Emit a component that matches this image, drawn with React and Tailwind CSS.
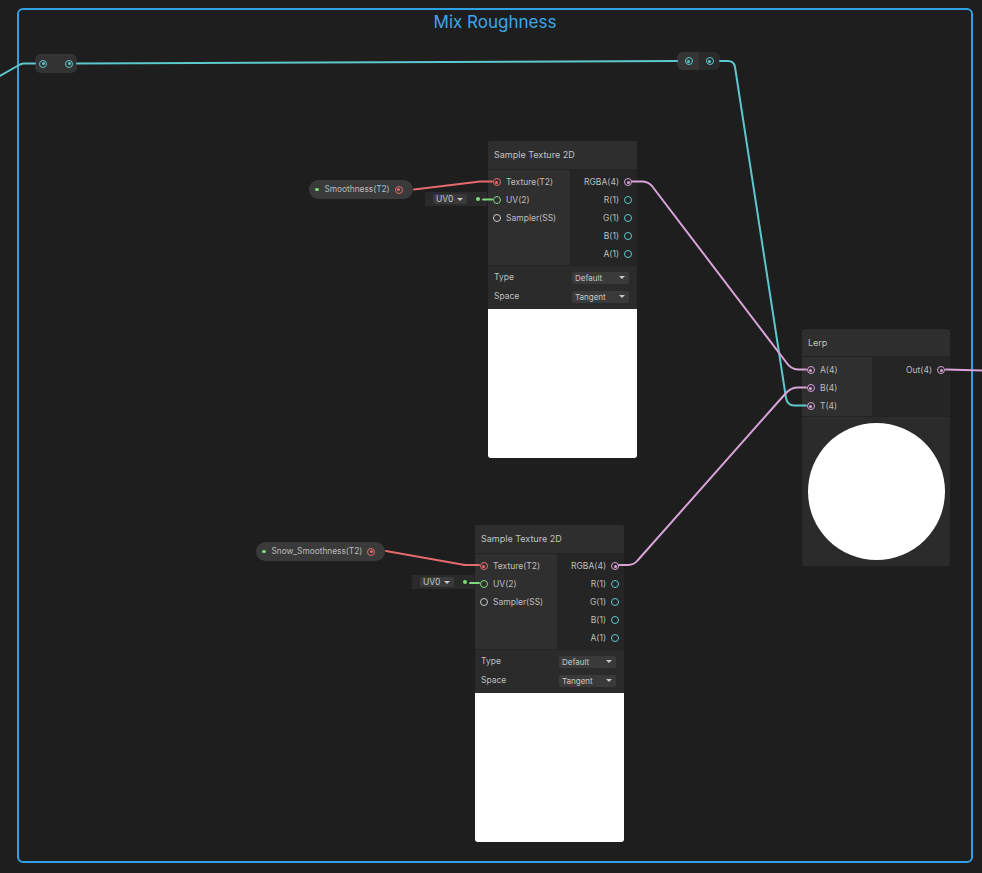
import React from "react";

const RING = {
  red: "border-[#e46a6c]",
  pink: "border-[#d9a3d9]",
  teal: "border-[#5cc7cc]",
  green: "border-[#7fd87f]",
  gray: "border-[#c8c8c8]",
};
const DOT = {
  red: "bg-[#e46a6c]",
  pink: "bg-[#d9a3d9]",
  teal: "bg-[#5cc7cc]",
};

function Port({ c, filled }) {
  return (
    <span
      className={
        "w-[8px] h-[8px] rounded-full border-[1.5px] flex items-center justify-center shrink-0 " +
        RING[c]
      }
    >
      {filled ? <span className={"w-[3px] h-[3px] rounded-full " + DOT[c]} /> : null}
    </span>
  );
}

function InRow({ c, filled, label }) {
  return (
    <div className="h-[18px] flex items-center pl-[4.5px] gap-[5.5px]">
      <Port c={c} filled={filled} />
      <span>{label}</span>
    </div>
  );
}

function OutRow({ c, filled, label }) {
  return (
    <div className="h-[18px] flex items-center justify-end pr-[5px] gap-[5px]">
      <span>{label}</span>
      <Port c={c} filled={filled} />
    </div>
  );
}

function Dropdown({ value }) {
  return (
    <div className="w-[57px] h-[12px] bg-[#3a3a3a] rounded-[2px] mr-[2px] pl-[3px] pr-[4px] flex items-center justify-between text-[8px] text-[#c8c8c8]">
      <span>{value}</span>
      <span className="w-0 h-0 border-l-[3px] border-r-[3px] border-t-[3px] border-l-transparent border-r-transparent border-t-[#c8c8c8]" />
    </div>
  );
}

function SampleTexture({ pos }) {
  return (
    <div className={"absolute w-[149px] rounded-[3px] overflow-hidden bg-[#2b2b2b] text-[8.5px] text-[#bfbfbf] " + pos}>
      <div className="h-[28px] bg-[#2e2e2e] flex items-center px-[6px] text-[9px] text-[#c2c2c2]">
        Sample Texture 2D
      </div>
      <div className="h-px bg-[#232323]" />
      <div className="flex h-[95px]">
        <div className="w-[82px] bg-[#2f2f2f] pt-[3px]">
          <InRow c="red" filled label="Texture(T2)" />
          <InRow c="green" label="UV(2)" />
          <InRow c="gray" label="Sampler(SS)" />
        </div>
        <div className="flex-1 bg-[#252525] pt-[3px]">
          <OutRow c="pink" filled label="RGBA(4)" />
          <OutRow c="teal" label="R(1)" />
          <OutRow c="teal" label="G(1)" />
          <OutRow c="teal" label="B(1)" />
          <OutRow c="teal" label="A(1)" />
        </div>
      </div>
      <div className="h-px bg-[#232323]" />
      <div className="h-[43px] bg-[#2b2b2b] px-[6px] pt-[2px]">
        <div className="h-[19px] flex items-center justify-between">
          <span>Type</span>
          <Dropdown value="Default" />
        </div>
        <div className="h-[19px] flex items-center justify-between">
          <span>Space</span>
          <Dropdown value="Tangent" />
        </div>
      </div>
      <div className="h-[149px] bg-white" />
    </div>
  );
}

function Property({ pos, label }) {
  return (
    <div className={"absolute h-[19px] rounded-full bg-[#3a3a3a] flex items-center pl-[6px] pr-[10px] text-[8.3px] text-[#bdbdbd] " + pos}>
      <span className="w-[3.5px] h-[3.5px] rounded-full bg-[#7fd87f] mr-[6px]" />
      <span className="mr-[5px]">{label}</span>
      <Port c="red" filled />
    </div>
  );
}

function UVBox({ pos }) {
  return (
    <div className={"absolute w-[62px] h-[14px] bg-[#2a2a2a] flex items-center pl-[8px] " + pos}>
      <div className="w-[34px] h-[10px] bg-[#3a3a3a] rounded-[2px] flex items-center justify-between pl-[3px] pr-[4px] text-[8.5px] text-[#c8c8c8]">
        <span>UV0</span>
        <span className="w-0 h-0 border-l-[3px] border-r-[3px] border-t-[3px] border-l-transparent border-r-transparent border-t-[#c8c8c8]" />
      </div>
      <span className="ml-[9px] w-[3.5px] h-[3.5px] rounded-full bg-[#7fd87f]" />
    </div>
  );
}

export default function App() {
  return (
    <div
      className="relative w-[982px] h-[873px] overflow-hidden bg-[#1e1e1e]"
      style={{ fontFamily: "Inter, 'Noto Sans', sans-serif" }}
    >
      {/* group frame */}
      <div className="absolute left-[17px] top-[8px] w-[956px] h-[855px] rounded-[6px] border-2 border-[#2ea2e4] flex justify-center">
        <span className="text-[17px] leading-[24px] text-[#3aa8e8]">Mix Roughness</span>
      </div>

      {/* reroute left */}
      <div className="absolute left-[35px] top-[54px] w-[42px] h-[19px] rounded-[6px] bg-[#333333] flex items-center justify-between px-[4px]">
        <Port c="teal" filled />
        <Port c="teal" filled />
      </div>

      {/* reroute right */}
      <div className="absolute left-[677px] top-[52px] w-[43px] h-[18px] rounded-[6px] overflow-hidden flex">
        <div className="w-[22px] bg-[#353535] flex items-center justify-center pl-[1px]">
          <Port c="teal" filled />
        </div>
        <div className="flex-1 bg-[#2a2a2a] flex items-center justify-center">
          <Port c="teal" filled />
        </div>
      </div>

      <Property pos="left-[309px] top-[180px]" label="Smoothness(T2)" />
      <UVBox pos="left-[425px] top-[192px]" />
      <SampleTexture pos="left-[488px] top-[141px]" />

      <Property pos="left-[256px] top-[542px]" label="Snow_Smoothness(T2)" />
      <UVBox pos="left-[412px] top-[575px]" />
      <SampleTexture pos="left-[475px] top-[525px]" />

      {/* Lerp */}
      <div className="absolute left-[802px] top-[329px] w-[148px] rounded-[3px] overflow-hidden text-[8.5px] text-[#bfbfbf]">
        <div className="h-[27px] bg-[#2e2e2e] flex items-center px-[6px] text-[9px] text-[#c2c2c2]">Lerp</div>
        <div className="h-px bg-[#232323]" />
        <div className="flex h-[59px]">
          <div className="w-[70px] bg-[#2f2f2f] pt-[4px]">
            <InRow c="pink" filled label="A(4)" />
            <InRow c="pink" filled label="B(4)" />
            <InRow c="pink" filled label="T(4)" />
          </div>
          <div className="flex-1 bg-[#252525] pt-[4px]">
            <OutRow c="pink" filled label="Out(4)" />
          </div>
        </div>
        <div className="h-px bg-[#232323]" />
        <div className="h-[149px] bg-[#2b2b2b] flex items-center justify-center">
          <div className="w-[137px] h-[137px] rounded-full bg-white" />
        </div>
      </div>

      {/* wires */}
      <svg className="absolute inset-0 pointer-events-none" width="982" height="873" fill="none" strokeWidth="2" strokeLinecap="round" strokeLinejoin="round">
        <path d="M-2 77 L20 64.5 Q22 63.5 24 63.5 L35 63.5" stroke="#5cc7cc" />
        <path d="M77 63.5 L677 61" stroke="#5cc7cc" />
        <path d="M720 61 L728 61 Q734 61 735 67 L786 398 Q787.5 405.5 794 405.5 L806 405.5" stroke="#5cc7cc" />
        <path d="M632 181.5 L642 181.5 Q648 181.5 652 186 L786 362 Q791 369.5 798 369.5 L806 369.5" stroke="#d9a3d9" />
        <path d="M619 565 L628 565 Q634 565 638 560 L786 393 Q791 387.5 798 387.5 L806 387.5" stroke="#d9a3d9" />
        <path d="M946 369.5 L982 370.5" stroke="#d9a3d9" />
        <path d="M414 189.5 L476 182 Q478 181.5 480 181.5 L492 181.5" stroke="#e46a6c" />
        <path d="M386 551 L462 564.5 Q464 565 466 565 L479 565" stroke="#e46a6c" />
        <path d="M483 199.5 L492 199.5" stroke="#7fd87f" />
        <path d="M470 583 L479 583" stroke="#7fd87f" />
      </svg>
    </div>
  );
}
